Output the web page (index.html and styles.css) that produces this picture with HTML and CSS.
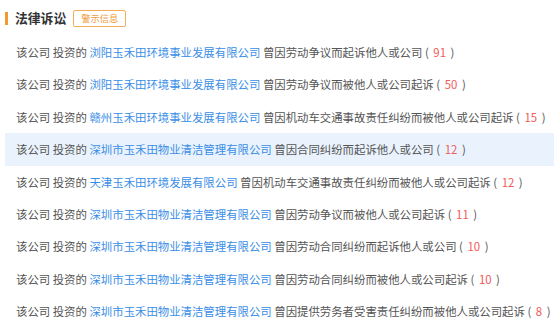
FILE: index.html
```html
<!DOCTYPE html>
<html>
<head>
  <meta charset="UTF-8">
  <title>法律诉讼</title>
  <link rel="stylesheet" href="styles.css">
</head>
<body>
  <div class="panel">
    <div class="panel-head">
      <span class="bar"></span>
      <h2>法律诉讼</h2>
      <span class="tag">警示信息</span>
    </div>
    <ul class="suit-list">
      <li>该公司 投资的 <a href="#">浏阳玉禾田环境事业发展有限公司</a> 曾因劳动争议而起诉他人或公司 ( <em>91</em> )</li>
      <li>该公司 投资的 <a href="#">浏阳玉禾田环境事业发展有限公司</a> 曾因劳动争议而被他人或公司起诉 ( <em>50</em> )</li>
      <li>该公司 投资的 <a href="#">赣州玉禾田环境事业发展有限公司</a> 曾因机动车交通事故责任纠纷而被他人或公司起诉 ( <em>15</em> )</li>
      <li class="active">该公司 投资的 <a href="#">深圳市玉禾田物业清洁管理有限公司</a> 曾因合同纠纷而起诉他人或公司 ( <em>12</em> )</li>
      <li>该公司 投资的 <a href="#">天津玉禾田环境发展有限公司</a> 曾因机动车交通事故责任纠纷而被他人或公司起诉 ( <em>12</em> )</li>
      <li>该公司 投资的 <a href="#">深圳市玉禾田物业清洁管理有限公司</a> 曾因劳动争议而被他人或公司起诉 ( <em>11</em> )</li>
      <li>该公司 投资的 <a href="#">深圳市玉禾田物业清洁管理有限公司</a> 曾因劳动合同纠纷而起诉他人或公司 ( <em>10</em> )</li>
      <li>该公司 投资的 <a href="#">深圳市玉禾田物业清洁管理有限公司</a> 曾因劳动合同纠纷而被他人或公司起诉 ( <em>10</em> )</li>
      <li>该公司 投资的 <a href="#">深圳市玉禾田物业清洁管理有限公司</a> 曾因提供劳务者受害责任纠纷而被他人或公司起诉 ( <em>8</em> )</li>
    </ul>
  </div>
</body>
</html>
```

FILE: styles.css
```css
body {
  margin: 0;
  padding: 0;
  background-color: #ffffff;
  font-family: "Noto Sans CJK SC", "Noto Sans", sans-serif;
  color: #555555;
}

.panel {
  padding-left: 5px;
}

.panel-head {
  display: flex;
  align-items: center;
  height: 36px;
}

.bar {
  width: 3px;
  height: 13px;
  background-color: #f39a2e;
  margin-right: 7px;
}

.panel-head h2 {
  margin: 0;
  font-size: 12.8px;
  font-weight: bold;
  color: #333333;
  line-height: 1;
}

.tag {
  margin-left: 7px;
  height: 15px;
  line-height: 15px;
  padding: 0 7px;
  border: 1px solid #f5ac5a;
  border-radius: 2px;
  font-size: 9.3px;
  color: #f19a3a;
}

.suit-list {
  list-style: none;
  margin: 0;
  padding: 0;
}

.suit-list li {
  height: 32.4px;
  line-height: 32.4px;
  padding-left: 11px;
  font-size: 11.4px;
  white-space: nowrap;
}

.suit-list li.active {
  background-color: #eaf3fd;
}

.suit-list a {
  color: #3a8ee6;
  text-decoration: none;
}

.suit-list em {
  font-style: normal;
  color: #f25a5a;
  margin: 0 2px;
}
```
